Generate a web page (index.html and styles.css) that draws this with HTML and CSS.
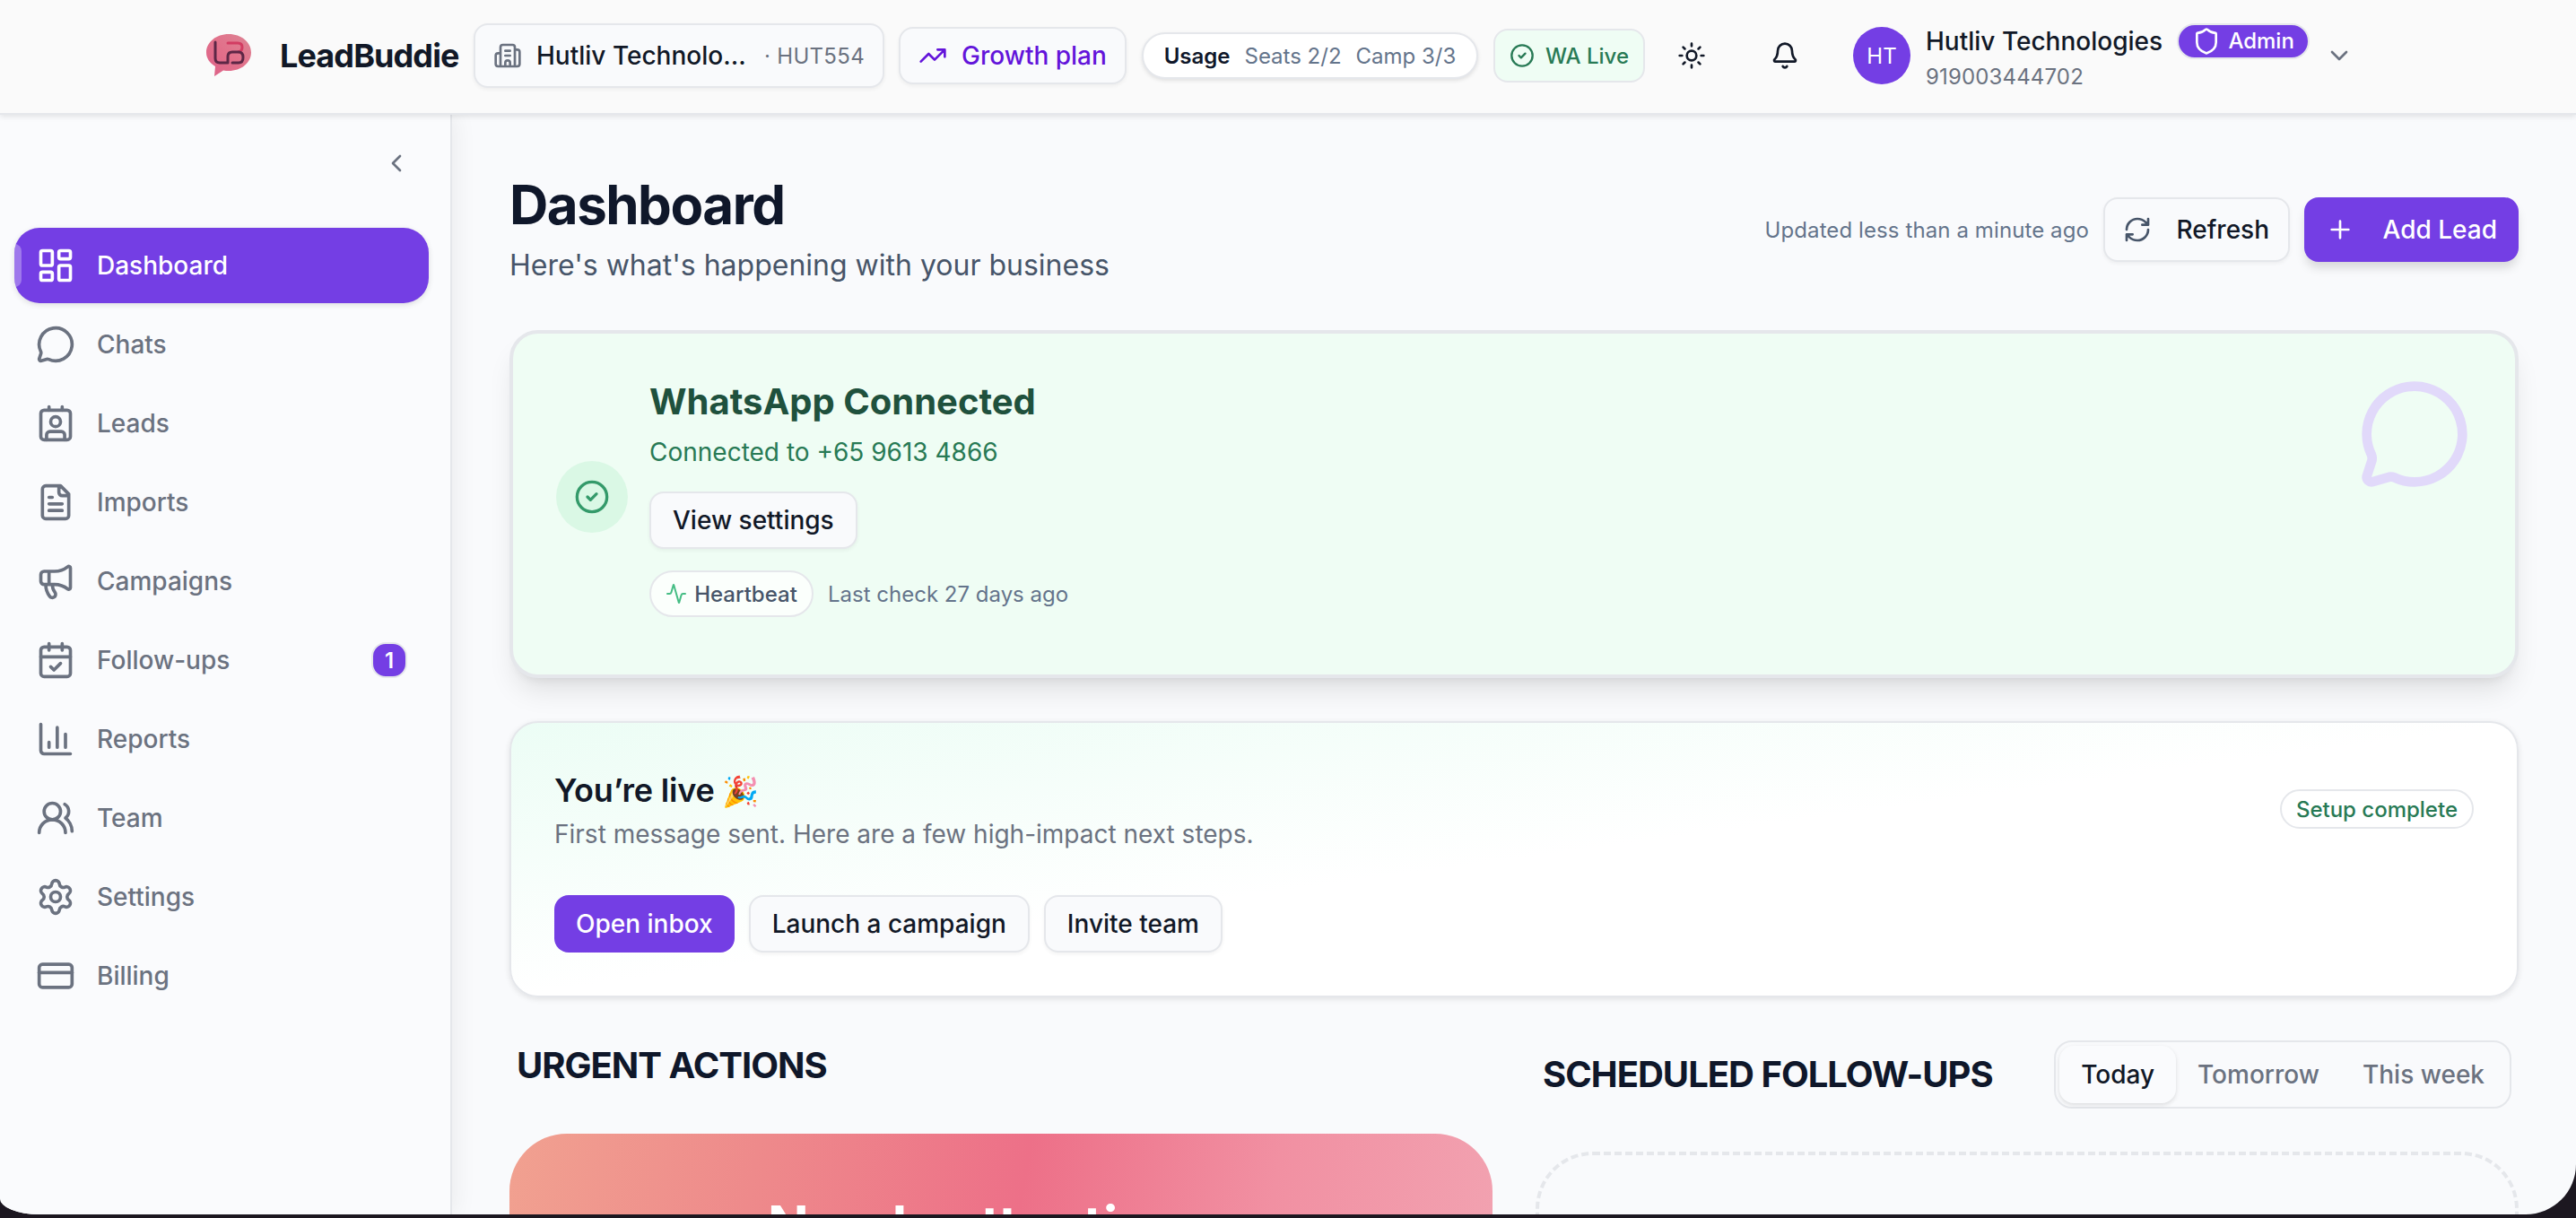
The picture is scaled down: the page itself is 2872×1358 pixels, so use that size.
FILE: index.html
```html
<!DOCTYPE html>
<html lang="en">
  <head>
    <meta charset="UTF-8" />
    <meta name="viewport" content="width=device-width, initial-scale=1.0" />
    <title>LeadBuddie - Dashboard</title>
    <link rel="stylesheet" href="styles.css">
  </head>
  <body>
    <div class="window">
      <header class="topbar">
        <div class="brand">
          <svg class="logo" viewBox="0 0 50 48">
            <defs>
              <linearGradient id="bubble" x1="1" y1="0" x2="0" y2="1">
                <stop offset="0" stop-color="#dc8494" />
                <stop offset="0.5" stop-color="#e2708a" />
                <stop offset="1" stop-color="#dc6088" />
              </linearGradient>
            </defs>
            <path fill="url(#bubble)" d="M25 0C39 0 50 9 50 20.500S39 41 25 41c-2 0-4-.2-6-.6L9 47l1-11C4 32.500 0 27 0 20.500 0 9 11 0 25 0z" />
            <g fill="none" stroke-width="3" stroke-linecap="round" stroke-linejoin="round">
              <path stroke="#d23c62" d="M24 10h11q5 0 5 4.500T36 20" />
              <path stroke="#5d2746" d="M10 9v18q0 5 5 5h9v-7q0-5 5-5h7q5 0 5 6t-5 6h-7" />
            </g>
          </svg>
          <span class="brand-name">LeadBuddie</span>
        </div>
        <div class="org box">
          <svg class="icon" viewBox="0 0 24 24"><path d="M10 12h4M10 8h4M14 21v-3a2 2 0 0 0-4 0v3M6 10H4a2 2 0 0 0-2 2v7a2 2 0 0 0 2 2h16a2 2 0 0 0 2-2V9a2 2 0 0 0-2-2h-2M6 21V5a2 2 0 0 1 2-2h8a2 2 0 0 1 2 2v16" /></svg>
          <span class="org-name">Hutliv Technolo…</span>
          <span class="org-code">· HUT554</span>
        </div>
        <div class="plan box">
          <svg class="icon" viewBox="0 0 24 24"><path d="M16 7h6v6M22 7l-8.500 8.500-5-5L2 17" /></svg>
          <span>Growth plan</span>
        </div>
        <div class="usage">
          <b>Usage</b>
          <span>Seats 2/2</span>
          <span>Camp 3/3</span>
        </div>
        <div class="wa-live">
          <svg class="icon" viewBox="0 0 24 24"><circle cx="12" cy="12" r="10" /><path d="m9 12 2 2 4-4" /></svg>
          <span>WA Live</span>
        </div>
        <button class="icon-button sun">
          <svg class="icon" viewBox="0 0 24 24"><circle cx="12" cy="12" r="4" /><path d="M12 2v2M12 20v2M4.930 4.930l1.410 1.410M17.660 17.660l1.410 1.410M2 12h2M20 12h2M6.340 17.660l-1.410 1.410M19.070 4.930l-1.410 1.410" /></svg>
        </button>
        <button class="icon-button bell">
          <svg class="icon" viewBox="0 0 24 24"><path d="M10.268 21a2 2 0 0 0 3.464 0M3.262 15.326A1 1 0 0 0 4 17h16a1 1 0 0 0 .740-1.673C19.410 13.956 18 12.499 18 8A6 6 0 0 0 6 8c0 4.499-1.411 5.956-2.738 7.326" /></svg>
        </button>
        <div class="account">
          <div class="avatar">HT</div>
          <div class="account-info">
            <div class="account-row">
              <span class="account-name">Hutliv Technologies</span>
              <span class="role">
                <svg class="icon" viewBox="0 0 24 24"><path d="M20 13c0 5-3.500 7.500-7.660 8.950a1 1 0 0 1-.670-.010C7.500 20.500 4 18 4 13V6a1 1 0 0 1 1-1c2 0 4.500-1.200 6.240-2.720a1.170 1.170 0 0 1 1.520 0C14.510 3.810 17 5 19 5a1 1 0 0 1 1 1z" /></svg>
                Admin
              </span>
            </div>
            <div class="account-phone">919003444702</div>
          </div>
          <svg class="icon chevron" viewBox="0 0 24 24"><path d="m6 9 6 6 6-6" /></svg>
        </div>
      </header>

      <div class="layout">
        <aside class="sidebar">
          <button class="collapse">
            <svg class="icon" viewBox="0 0 24 24"><path d="m15 18-6-6 6-6" /></svg>
          </button>
          <nav class="nav">
            <a class="nav-item active">
              <svg class="icon" viewBox="0 0 24 24"><rect width="7" height="9" x="3" y="3" rx="1" /><rect width="7" height="5" x="14" y="3" rx="1" /><rect width="7" height="9" x="14" y="12" rx="1" /><rect width="7" height="5" x="3" y="16" rx="1" /></svg>
              <span>Dashboard</span>
            </a>
            <a class="nav-item">
              <svg class="icon" viewBox="0 0 24 24"><path d="M2.992 16.342a2 2 0 0 1 .094 1.167l-1.065 3.290a1 1 0 0 0 1.236 1.168l3.413-.998a2 2 0 0 1 1.099.092 10 10 0 1 0-4.777-4.719" /></svg>
              <span>Chats</span>
            </a>
            <a class="nav-item">
              <svg class="icon" viewBox="0 0 24 24"><path d="M16 2v2M8 2v2M17.500 22v-3a2 2 0 0 0-2-2h-7a2 2 0 0 0-2 2v3" /><circle cx="12" cy="11" r="3" /><rect x="3" y="4" width="18" height="18" rx="2" /></svg>
              <span>Leads</span>
            </a>
            <a class="nav-item">
              <svg class="icon" viewBox="0 0 24 24"><path d="M15 2H6a2 2 0 0 0-2 2v16a2 2 0 0 0 2 2h12a2 2 0 0 0 2-2V7ZM14 2v4a2 2 0 0 0 2 2h4M10 9H8M16 13H8M16 17H8" /></svg>
              <span>Imports</span>
            </a>
            <a class="nav-item">
              <svg class="icon" viewBox="0 0 24 24"><path d="M11 6a13 13 0 0 0 8.400-2.800A1 1 0 0 1 21 4v12a1 1 0 0 1-1.600.8A13 13 0 0 0 11 14H5a2 2 0 0 1-2-2V8a2 2 0 0 1 2-2zM6 14a12 12 0 0 0 2.400 7.200 2 2 0 0 0 3.200-2.400A8 8 0 0 1 10 14M8 6v8" /></svg>
              <span>Campaigns</span>
            </a>
            <a class="nav-item">
              <svg class="icon" viewBox="0 0 24 24"><path d="M8 2v4M16 2v4M3 10h18M9 16l2 2 4-4" /><rect width="18" height="18" x="3" y="4" rx="2" /></svg>
              <span>Follow-ups</span>
              <span class="count">1</span>
            </a>
            <a class="nav-item">
              <svg class="icon" viewBox="0 0 24 24"><path d="M3 3v16a2 2 0 0 0 2 2h16M18 17V9M13 17V5M8 17v-3" /></svg>
              <span>Reports</span>
            </a>
            <a class="nav-item">
              <svg class="icon" viewBox="0 0 24 24"><path d="M18 21a8 8 0 0 0-16 0" /><circle cx="10" cy="8" r="5" /><path d="M22 20c0-3.370-2-6.500-4-8a5 5 0 0 0-.450-8.300" /></svg>
              <span>Team</span>
            </a>
            <a class="nav-item">
              <svg class="icon" viewBox="0 0 24 24"><path d="M9.671 4.136a2.340 2.340 0 0 1 4.659 0 2.340 2.340 0 0 0 3.319 1.915 2.340 2.340 0 0 1 2.330 4.033 2.340 2.340 0 0 0 0 3.831 2.340 2.340 0 0 1-2.330 4.033 2.340 2.340 0 0 0-3.319 1.915 2.340 2.340 0 0 1-4.659 0 2.340 2.340 0 0 0-3.320-1.915 2.340 2.340 0 0 1-2.330-4.033 2.340 2.340 0 0 0 0-3.831A2.340 2.340 0 0 1 6.350 6.051a2.340 2.340 0 0 0 3.319-1.915" /><circle cx="12" cy="12" r="3" /></svg>
              <span>Settings</span>
            </a>
            <a class="nav-item">
              <svg class="icon" viewBox="0 0 24 24"><rect width="20" height="14" x="2" y="5" rx="2" /><path d="M2 10h20" /></svg>
              <span>Billing</span>
            </a>
          </nav>
        </aside>

        <main class="content">
          <div class="page-head">
            <div>
              <h1>Dashboard</h1>
              <p class="subtitle">Here's what's happening with your business</p>
            </div>
            <div class="page-actions">
              <span class="updated">Updated less than a minute ago</span>
              <button class="button large refresh">
                <svg class="icon" viewBox="0 0 24 24"><path d="M3 12a9 9 0 0 1 9-9 9.750 9.750 0 0 1 6.740 2.740L21 8M21 3v5h-5M21 12a9 9 0 0 1-9 9 9.750 9.750 0 0 1-6.740-2.740L3 16M8 16H3v5" /></svg>
                <span>Refresh</span>
              </button>
              <button class="button large primary add-lead">
                <svg class="icon" viewBox="0 0 24 24"><path d="M5 12h14M12 5v14" /></svg>
                <span>Add Lead</span>
              </button>
            </div>
          </div>

          <section class="wa-card">
            <div class="wa-check">
              <svg class="icon" viewBox="0 0 24 24"><circle cx="12" cy="12" r="10" /><path d="m9 12 2 2 4-4" /></svg>
            </div>
            <div class="wa-body">
              <h2>WhatsApp Connected</h2>
              <p>Connected to +65 9613 4866</p>
              <button class="button view-settings">View settings</button>
              <div class="heartbeat-row">
                <span class="heartbeat">
                  <svg class="icon" viewBox="0 0 24 24"><path d="M22 12h-2.480a2 2 0 0 0-1.930 1.460l-2.350 8.360a.25.25 0 0 1-.480 0L9.240 2.180a.25.25 0 0 0-.480 0l-2.350 8.360A2 2 0 0 1 4.490 12H2" /></svg>
                  Heartbeat
                </span>
                <span class="last-check">Last check 27 days ago</span>
              </div>
            </div>
            <svg class="icon wa-bubble" viewBox="0 0 24 24"><path d="M2.992 16.342a2 2 0 0 1 .094 1.167l-1.065 3.290a1 1 0 0 0 1.236 1.168l3.413-.998a2 2 0 0 1 1.099.092 10 10 0 1 0-4.777-4.719" /></svg>
          </section>

          <section class="live-card">
            <div class="live-head">
              <div>
                <h3>You’re live <span class="emoji">🎉</span></h3>
                <p>First message sent. Here are a few high-impact next steps.</p>
              </div>
              <span class="setup">Setup complete</span>
            </div>
            <div class="live-actions">
              <button class="button primary open-inbox">Open inbox</button>
              <button class="button">Launch a campaign</button>
              <button class="button">Invite team</button>
            </div>
          </section>

          <div class="columns">
            <section class="urgent">
              <h2 class="section-title">URGENT ACTIONS</h2>
              <div class="attention">Needs attention</div>
            </section>
            <section class="scheduled">
              <div class="scheduled-head">
                <h2 class="section-title">SCHEDULED FOLLOW-UPS</h2>
                <div class="tabs">
                  <button class="tab selected">Today</button>
                  <button class="tab">Tomorrow</button>
                  <button class="tab">This week</button>
                </div>
              </div>
              <div class="empty"></div>
            </section>
          </div>
        </main>
      </div>
    </div>
  </body>
</html>
```

FILE: styles.css
```css
* {
  margin: 0;
  padding: 0;
  box-sizing: border-box;
}

body {
  height: 1358px;
  overflow: hidden;
  background-color: #1c1720;
  font-family: Inter, "Liberation Sans", sans-serif;
  font-size: 28px;
  color: #111827;
}

button {
  font: inherit;
  color: inherit;
  background: none;
  border: none;
}

.icon {
  flex: none;
  width: 32px;
  height: 32px;
  fill: none;
  stroke: currentColor;
  stroke-width: 2;
  stroke-linecap: round;
  stroke-linejoin: round;
}

.window {
  height: 1354px;
  display: flex;
  flex-direction: column;
  overflow: hidden;
  border-radius: 0 0 56px 44px / 0 0 56px 18px;
  background-color: #f9fafc;
}

/* top bar */

.topbar {
  position: relative;
  z-index: 1;
  flex: none;
  height: 128px;
  padding: 0 0 2px 230px;
  display: flex;
  align-items: center;
  background-color: #fafafa;
  border-bottom: 2px solid #e5e7eb;
  box-shadow: 0 2px 6px rgba(0, 0, 0, 0.1);
  white-space: nowrap;
}

.brand {
  width: 298px;
  display: flex;
  align-items: center;
}

.logo {
  width: 50px;
  height: 48px;
  margin-right: 32px;
}

.brand-name {
  font-size: 36px;
  font-weight: 700;
  letter-spacing: -0.9px;
}

.box {
  display: flex;
  align-items: center;
  background-color: #f9fafc;
  border: 2px solid #e5e7eb;
  border-radius: 16px;
  box-shadow: 0 2px 4px rgba(0, 0, 0, 0.05);
}

.org {
  width: 458px;
  height: 72px;
  padding-left: 20px;
  margin-right: 16px;
  font-weight: 500;
}

.org .icon {
  margin-right: 16px;
  color: #6b7280;
}

.org-name {
  width: 254px;
}

.org-code {
  font-size: 24px;
  font-weight: 400;
  letter-spacing: 0.3px;
  color: #6b7280;
}

.plan {
  width: 254px;
  height: 64px;
  padding-left: 20px;
  margin-right: 17px;
  gap: 16px;
  color: #6314da;
  font-weight: 500;
}

.usage {
  width: 375px;
  height: 52px;
  margin-right: 17px;
  display: flex;
  align-items: center;
  justify-content: center;
  gap: 16px;
  background-color: #fff;
  border: 2px solid #e5e7eb;
  border-radius: 26px;
  box-shadow: 0 2px 4px rgba(0, 0, 0, 0.1);
  font-size: 24px;
  color: #64748b;
}

.usage b {
  font-weight: 600;
  color: #0f172a;
}

.wa-live {
  width: 169px;
  height: 60px;
  display: flex;
  align-items: center;
  justify-content: center;
  gap: 12px;
  color: #287a55;
  background-color: #effdf4;
  border: 2px solid #e5e7eb;
  border-radius: 16px;
  font-size: 24px;
  font-weight: 500;
}

.wa-live .icon {
  width: 28px;
  height: 28px;
}

.icon-button {
  width: 72px;
  height: 72px;
  display: flex;
  align-items: center;
  justify-content: center;
}

.sun {
  margin-left: 16px;
}

.bell {
  margin-left: 32px;
}

.account {
  margin-left: 40px;
  display: flex;
  align-items: center;
}

.avatar {
  width: 64px;
  height: 64px;
  margin-right: 17px;
  display: flex;
  align-items: center;
  justify-content: center;
  color: #fff;
  background-color: #743ee4;
  border-radius: 50%;
  font-size: 24px;
}

.account-info {
  padding-top: 7px;
}

.account-row {
  display: flex;
  align-items: center;
  height: 40px;
  font-weight: 500;
}

.role {
  width: 148px;
  height: 40px;
  margin-left: 16px;
  display: flex;
  align-items: center;
  justify-content: center;
  gap: 8px;
  color: #fff;
  background-color: #743ee4;
  border: 2px solid #e5e7eb;
  border-radius: 20px;
  font-size: 24px;
}

.account-phone {
  height: 40px;
  line-height: 40px;
  font-size: 24px;
  letter-spacing: 0.15px;
  color: #6b7280;
}

.chevron {
  margin-left: 17px;
  color: #6b7280;
}

/* sidebar */

.layout {
  flex: 1;
  display: flex;
  min-height: 0;
}

.sidebar {
  flex: none;
  width: 504px;
  padding: 36px 24px 0 16px;
  background-color: #fafbfd;
  border-right: 2px solid #e5e7eb;
  box-shadow: 4px 0 24px rgba(0, 0, 0, 0.06);
  color: #6b7280;
}

.collapse {
  width: 36px;
  height: 36px;
  margin: 0 0 54px 408px;
  display: flex;
  align-items: center;
  justify-content: center;
}

.nav {
  display: flex;
  flex-direction: column;
  gap: 4px;
}

.nav-item {
  position: relative;
  height: 84px;
  padding: 0 24px;
  display: flex;
  align-items: center;
  gap: 24px;
  border-radius: 28px;
  overflow: hidden;
  font-weight: 500;
}

.nav-item .icon {
  width: 44px;
  height: 44px;
}

.active {
  color: #fff;
  background-color: #743ee4;
  box-shadow: 0 2px 6px rgba(0, 0, 0, 0.12);
}

.active::before {
  content: "";
  position: absolute;
  left: 0;
  top: 18px;
  width: 8px;
  height: 48px;
  background-color: rgba(255, 255, 255, 0.3);
  border-radius: 0 8px 8px 0;
}

.count {
  width: 40px;
  height: 40px;
  margin-left: auto;
  display: flex;
  align-items: center;
  justify-content: center;
  color: #fff;
  background-color: #743ee4;
  border: 2px solid #e5e7eb;
  border-radius: 16px;
  font-size: 24px;
  font-weight: 600;
}

/* content */

.content {
  flex: 1;
  min-width: 0;
  padding: 64px 64px 0;
}

.page-head {
  height: 176px;
  display: flex;
  justify-content: space-between;
}

h1 {
  height: 72px;
  line-height: 72px;
  font-size: 60px;
  font-weight: 700;
  letter-spacing: -1.5px;
  color: #0f172a;
}

.subtitle {
  margin-top: 8px;
  line-height: 48px;
  font-size: 32px;
  color: #475569;
}

.page-actions {
  height: 72px;
  margin-top: 28px;
  display: flex;
  align-items: center;
  gap: 16px;
}

.updated {
  font-size: 24px;
  letter-spacing: 0.1px;
  color: #64748b;
}

.button {
  height: 64px;
  padding: 0 24px;
  display: flex;
  align-items: center;
  background-color: #f9fafc;
  border: 2px solid #e5e7eb;
  border-radius: 16px;
  box-shadow: 0 2px 4px rgba(0, 0, 0, 0.05);
  font-weight: 500;
  white-space: nowrap;
}

.large {
  height: 72px;
}

.refresh {
  width: 208px;
  padding: 0 21px 0 20px;
  justify-content: space-between;
}

.refresh .icon {
  color: #475569;
}

.primary {
  color: #fff;
  background-color: #743ee4;
  border: none;
  box-shadow: none;
}

.add-lead {
  width: 239px;
  justify-content: space-between;
  box-shadow: 0 8px 12px -2px rgba(0, 0, 0, 0.15);
}

.wa-card {
  height: 388px;
  padding: 48px;
  display: flex;
  background-color: #effdf4;
  border: 4px solid #e5e7eb;
  border-radius: 32px;
  box-shadow: 0 20px 30px -6px rgba(0, 0, 0, 0.1), 0 8px 12px -8px rgba(0, 0, 0, 0.1);
}

.wa-check {
  width: 80px;
  height: 80px;
  margin: 94px 24px 0 0;
  display: flex;
  align-items: center;
  justify-content: center;
  color: #349a6a;
  background-color: #daf8e5;
  border-radius: 50%;
}

.wa-check .icon {
  width: 40px;
  height: 40px;
}

.wa-body h2 {
  line-height: 56px;
  font-size: 40px;
  font-weight: 700;
  color: #1f513d;
}

.wa-body p {
  margin-top: 8px;
  line-height: 40px;
  color: #287a55;
}

.view-settings {
  margin-top: 24px;
}

.heartbeat-row {
  margin-top: 24px;
  display: flex;
  align-items: center;
  gap: 16px;
  font-size: 24px;
  color: #64748b;
}

.heartbeat {
  width: 183px;
  height: 52px;
  display: flex;
  align-items: center;
  justify-content: center;
  gap: 8px;
  background-color: #fbfffc;
  border: 2px solid #e5e7eb;
  border-radius: 26px;
  font-weight: 500;
  color: #475569;
}

.heartbeat .icon {
  width: 24px;
  height: 24px;
  color: #45bd84;
}

.wa-bubble {
  width: 128px;
  height: 128px;
  margin-left: auto;
  color: #e1d9fa;
}

.live-card {
  height: 308px;
  margin-top: 48px;
  padding: 48px;
  background: linear-gradient(to bottom right, #ecfdf5, #fff 50%);
  border: 2px solid #e5e7eb;
  border-radius: 32px;
  box-shadow: 0 2px 6px rgba(0, 0, 0, 0.1);
}

.live-head {
  display: flex;
  justify-content: space-between;
  align-items: center;
}

.live-head h3 {
  height: 56px;
  line-height: 55px;
  font-size: 36px;
  font-weight: 600;
  letter-spacing: -0.2px;
}

.emoji {
  font-size: 33px;
  line-height: 1;
}

.live-head p {
  line-height: 40px;
  color: #6b7280;
}

.setup {
  height: 44px;
  padding: 0 16px;
  display: flex;
  align-items: center;
  border: 2px solid #e5e7eb;
  border-radius: 22px;
  font-size: 24px;
  font-weight: 500;
  color: #287a55;
}

.live-actions {
  margin-top: 48px;
  display: flex;
  gap: 16px;
}

.columns {
  margin-top: 48px;
  display: grid;
  grid-template-columns: 1fr 1fr;
  gap: 48px;
}

.section-title {
  font-size: 40px;
  line-height: 56px;
  font-weight: 700;
  letter-spacing: -1px;
  color: #0f172a;
}

.urgent .section-title {
  padding-left: 8px;
}

.attention {
  height: 400px;
  margin-top: 48px;
  padding: 72px 0 0 288px;
  border-radius: 64px;
  background: linear-gradient(100deg, #f1a190 0%, #ee8a8b 24%, #ed7088 50%, #f190a2 74%, #f2a5b3 100%);
  font-size: 60px;
  font-weight: 700;
  line-height: 60px;
  color: #fff;
}

.scheduled-head {
  height: 76px;
  padding: 0 8px;
  display: flex;
  align-items: center;
  justify-content: space-between;
}

.tabs {
  height: 76px;
  padding: 4px;
  display: flex;
  border: 2px solid #e5e7eb;
  border-radius: 20px;
}

.tab {
  height: 64px;
  padding: 0 24px;
  border-radius: 16px;
  font-weight: 500;
  color: #6b7280;
}

.selected {
  color: #111827;
  background-color: #fafbfd;
  box-shadow: 0 2px 5px rgba(0, 0, 0, 0.12);
}

.empty {
  height: 400px;
  margin-top: 48px;
  border: 4px dashed #e5e7eb;
  border-radius: 64px;
}
```
